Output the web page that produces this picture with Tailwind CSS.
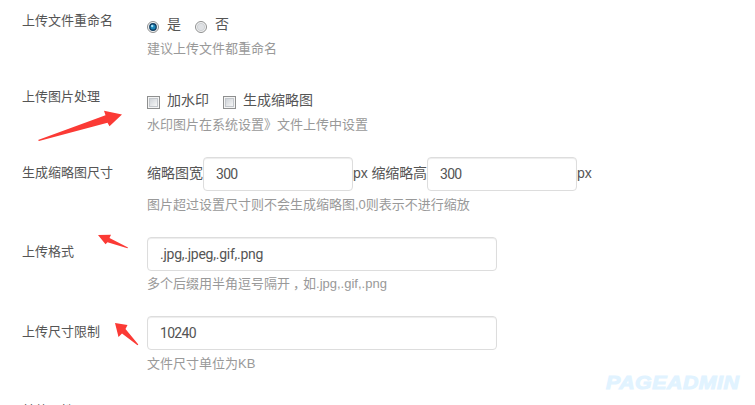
<!DOCTYPE html>
<html lang="zh-CN">
<head>
  <meta charset="UTF-8" />
  <title>上传设置</title>
  <script src="https://cdn.jsdelivr.net/npm/@tailwindcss/browser@4"></script>
</head>
<body class="bg-white">
  <div class="relative w-[755px] h-[405px] overflow-hidden pt-[5px] pl-[22px] font-['Liberation_Sans','Noto_Sans_CJK_SC',sans-serif] text-[14px] text-[#555] whitespace-nowrap">

    <!-- rename -->
    <div class="flex h-[76px]">
      <div class="w-[125px] shrink-0 pt-px text-[13px] leading-[30px]">上传文件重命名</div>
      <div>
        <div class="flex items-center h-[34px] pt-1">
          <svg class="w-3 h-3 mt-1.5" viewBox="0 0 12 12">
            <circle cx="6" cy="6" r="5.5" fill="#f4f4f4" stroke="#8e8f8f" />
            <circle cx="6" cy="6" r="3.9" fill="#123f63" />
            <circle cx="6" cy="6" r="2.5" fill="#1b86b8" />
            <circle cx="5.2" cy="5" r="1.2" fill="#a5e2fa" />
          </svg>
          <span class="ml-2">是</span>
          <svg class="w-3 h-3 mt-1.5 ml-3.5" viewBox="0 0 12 12">
            <circle cx="6" cy="6" r="5.5" fill="#f4f4f4" stroke="#8e8f8f" />
            <circle cx="6" cy="6" r="3.7" fill="#dfe1e4" stroke="#c4c8cc" stroke-width=".7" />
          </svg>
          <span class="ml-2">否</span>
        </div>
        <div class="pt-px text-[13px] leading-[18px] text-[#999]">建议上传文件都重命名</div>
      </div>
    </div>

    <!-- image handling -->
    <div class="flex h-[76px]">
      <div class="w-[125px] shrink-0 pt-px text-[13px] leading-[30px]">上传图片处理</div>
      <div>
        <div class="flex items-center h-[34px] pt-1">
          <span class="w-[13px] h-[13px] mt-1 border border-[#8e8f8f] bg-[#f4f4f4] p-px"><span class="block w-[9px] h-[9px] border border-[#c3c7cc] bg-linear-to-br from-[#cfd3d8] to-[#f6f6f6]"></span></span>
          <span class="ml-[7px]">加水印</span>
          <span class="w-[13px] h-[13px] mt-1 ml-3.5 border border-[#8e8f8f] bg-[#f4f4f4] p-px"><span class="block w-[9px] h-[9px] border border-[#c3c7cc] bg-linear-to-br from-[#cfd3d8] to-[#f6f6f6]"></span></span>
          <span class="ml-[7px]">生成缩略图</span>
        </div>
        <div class="pt-px text-[13px] leading-[18px] text-[#999]">水印图片在系统设置》文件上传中设置</div>
      </div>
    </div>

    <!-- thumbnail size -->
    <div class="flex h-[80px]">
      <div class="w-[125px] shrink-0 pt-px text-[13px] leading-[30px]">生成缩略图尺寸</div>
      <div>
        <div class="flex h-[34px] leading-8">
          <span>缩略图宽</span>
          <input type="text" value="300" class="w-[150px] h-[34px] px-3 font-['Roboto',sans-serif] tracking-[-0.7px] border border-[#ddd] rounded inset-shadow-[0_1px_1px_#00000013]" />
          <span class="w-[74px] tracking-[-0.1px]">px 缩缩略高</span>
          <input type="text" value="300" class="w-[150px] h-[34px] px-3 font-['Roboto',sans-serif] tracking-[-0.7px] border border-[#ddd] rounded inset-shadow-[0_1px_1px_#00000013]" />
          <span>px</span>
        </div>
        <div class="mt-1 pt-px text-[13px] leading-[18px] text-[#999]">图片超过设置尺寸则不会生成缩略图,0则表示不进行缩放</div>
      </div>
    </div>

    <!-- formats -->
    <div class="flex h-[79px]">
      <div class="w-[125px] shrink-0 pt-px text-[13px] leading-[28px]">上传格式</div>
      <div>
        <input type="text" value=".jpg,.jpeg,.gif,.png" class="block w-[350px] h-[34px] px-3 font-['Roboto',sans-serif] tracking-[-0.25px] border border-[#ddd] rounded inset-shadow-[0_1px_1px_#00000013]" />
        <div class="mt-[3px] pt-px text-[13px] leading-[18px] text-[#999]">多个后缀用半角逗号隔开<span class="relative left-[3px]">，</span>如.jpg,.gif,.png</div>
      </div>
    </div>

    <!-- size limit -->
    <div class="flex h-[80px]">
      <div class="w-[125px] shrink-0 pt-px text-[13px] leading-[30px]">上传尺寸限制</div>
      <div>
        <input type="text" value="10240" class="block w-[350px] h-[34px] px-3 font-['Roboto',sans-serif] tracking-[-0.7px] border border-[#ddd] rounded inset-shadow-[0_1px_1px_#00000013]" />
        <div class="mt-1 pt-px text-[13px] leading-[18px] text-[#999]">文件尺寸单位为KB</div>
      </div>
    </div>

    <div class="text-[13px] leading-[30px]">其他属性</div>

    <!-- pointer arrows -->
    <svg class="absolute inset-0 pointer-events-none" width="755" height="405" fill="#fb3a35">
      <path d="M38 140 L105.5 115.3 L104 110.8 L122 114.5 L109.5 126.3 L107.5 122.7 L39 141 Z" />
      <path d="M98 235 L111 234.7 L109.5 238 L128 247.5 L127.5 248.3 L107.5 242.3 L105.5 244.3 Z" />
      <path d="M115 323 L127.5 325 L125.5 329 L138.3 344.5 L137.5 345.3 L122 333.5 L118.5 337 Z" />
    </svg>

    <div class="absolute left-[606px] top-[373px] origin-left scale-x-[1.12] font-['Liberation_Sans',sans-serif] text-[19px] leading-5 font-bold italic text-[#e1f3ff] tracking-[0.5px] [-webkit-text-stroke:1px_#e1f3ff]">PAGEADMIN</div>
  </div>
</body>
</html>
